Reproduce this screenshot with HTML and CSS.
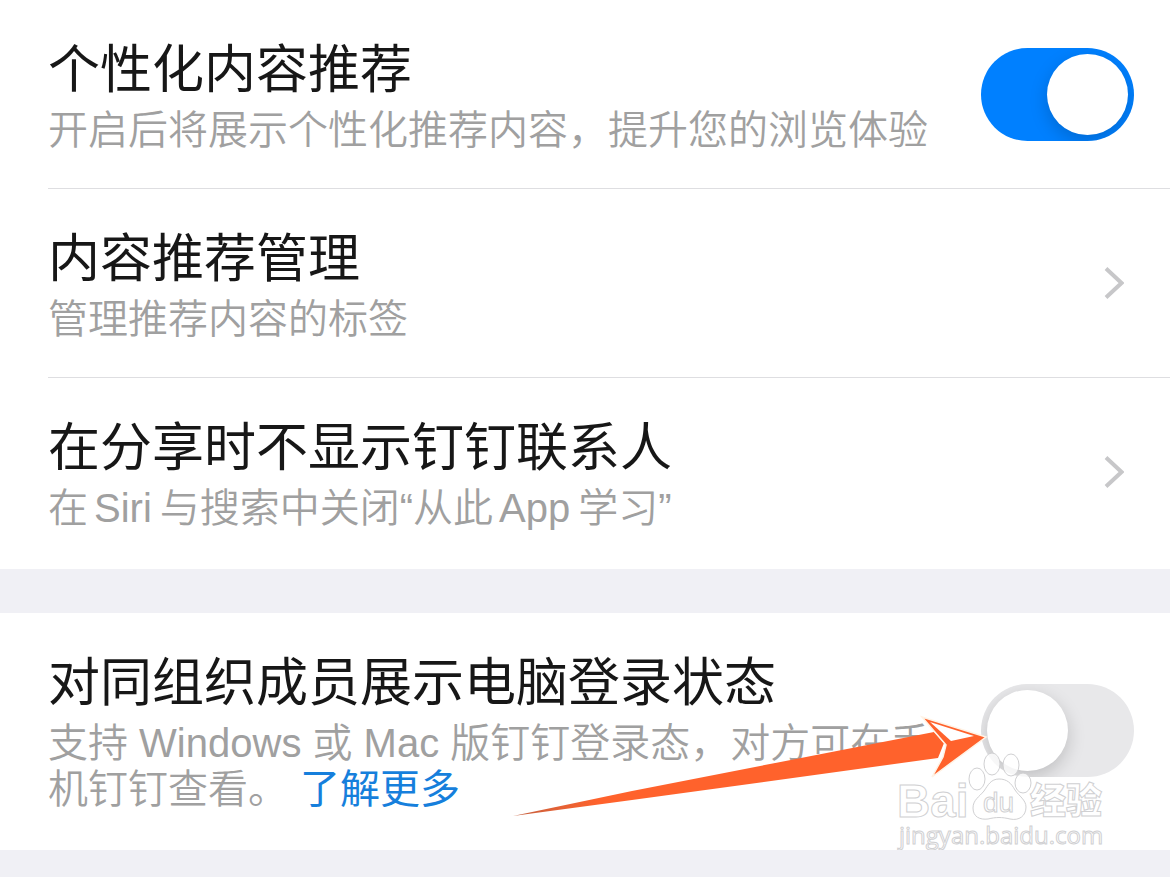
FILE: index.html
```html
<!DOCTYPE html>
<html lang="zh-CN">
<head>
    <meta charset="UTF-8">
    <meta name="viewport" content="width=device-width, initial-scale=1.0">
    <title>隐私设置</title>
    <link rel="stylesheet" href="styles.css">
</head>
<body>
    <main class="settings">
        <section class="group">
            <div class="row">
                <label class="copy" for="personalized">
                    <span class="title">个性化内容推荐</span>
                    <span class="desc">开启后将展示个性化推荐内容，提升您的浏览体验</span>
                </label>
                <input class="switch" type="checkbox" role="switch" id="personalized" checked>
            </div>
            <a class="row" href="#manage">
                <span class="copy">
                    <span class="title">内容推荐管理</span>
                    <span class="desc">管理推荐内容的标签</span>
                </span>
                <svg class="chevron" viewBox="0 0 20 34" aria-hidden="true"><path d="M2 2.500L17.500 17L2 31.500"/></svg>
            </a>
            <a class="row" href="#share">
                <span class="copy">
                    <span class="title">在分享时不显示钉钉联系人</span>
                    <span class="desc">在<span class="latin">Siri</span>与搜索中关闭“从此<span class="latin">App</span>学习”</span>
                </span>
                <svg class="chevron" viewBox="0 0 20 34" aria-hidden="true"><path d="M2 2.500L17.500 17L2 31.500"/></svg>
            </a>
        </section>

        <section class="group">
            <div class="row">
                <div class="copy">
                    <label class="title" for="status">对同组织成员展示电脑登录状态</label>
                    <span class="desc">支持 Windows 或 Mac 版钉钉登录态，对方可在手机钉钉查看。<a class="more" href="#more">了解更多</a></span>
                </div>
                <input class="switch" type="checkbox" role="switch" id="status">
            </div>

            <!-- 指向开关的箭头 -->
            <svg class="arrow" viewBox="0 0 476 104" aria-hidden="true">
                <defs>
                    <linearGradient id="tail" x1="0" x2="1">
                        <stop offset="0" stop-color="#c4603f"/>
                        <stop offset="0.2" stop-color="#ff622c"/>
                    </linearGradient>
                </defs>
                <path d="M1 102L120 77L422 18L432 29L426 44L120 86Z" fill="url(#tail)"/>
                <path d="M410 3L474 23L420 63L431 43L434 31Z" fill="#ff622c" stroke="#fff3e6" stroke-width="1.500"/>
                <path d="M418 8L462 22L439 27Z" fill="#fff"/>
            </svg>

            <!-- 水印 -->
            <svg class="watermark" viewBox="0 0 220 104">
                <g class="mark">
                    <ellipse cx="82" cy="29" rx="8" ry="11"/>
                    <ellipse cx="97" cy="14" rx="8" ry="11"/>
                    <ellipse cx="116" cy="15" rx="8" ry="11"/>
                    <ellipse cx="128" cy="33" rx="8" ry="10"/>
                    <path d="M104 29C96 29 93 35 89 41C84 47 78 50 78 58C78 67 85 70 93 69C101 67 107 67 115 69C124 71 131 66 131 57C131 50 124 46 120 40C116 33 112 29 104 29Z"/>
                    <text class="bai" x="2" y="67">Bai</text>
                    <text class="du" x="88" y="62">du</text>
                    <text class="jingyan" x="135" y="64">经验</text>
                    <text class="site" x="4" y="94">jingyan.baidu.com</text>
                </g>
            </svg>
        </section>
    </main>
</body>
</html>
```
FILE: styles.css
```css
* {
    box-sizing: border-box;
    margin: 0;
    padding: 0;
}
body {
    font-family: "Liberation Sans", "Noto Sans CJK SC", sans-serif;
    background: #f0f0f5;
    color: #171717;
}
.settings {
    display: flex;
    flex-direction: column;
    gap: 44px;
}
.group {
    position: relative;
    background: #fff;
    padding: 0 0 2px 48px;
}
.row {
    display: flex;
    align-items: center;
    gap: 24px;
    padding: 33px 36px 33px 0;
    border-bottom: 1px solid #dedee1;
    color: inherit;
    text-decoration: none;
}
.group .row:nth-last-child(1 of .row) {
    border-bottom-color: transparent;
}
.copy {
    flex: 1;
    min-width: 0;
    padding-bottom: 2px;
}
.title,
.desc {
    display: block;
}
.title {
    font-size: 52px;
    line-height: 74px;
    font-weight: 400;
}
.desc {
    font-size: 40px;
    line-height: 46px;
    font-weight: 350;
    color: #a0a0a0;
}
.latin {
    margin: 0 8px 0 6px;
}
.more {
    margin-left: 12px;
    font-weight: 400;
    color: #167fdc;
    text-decoration: none;
}
.chevron {
    flex: none;
    width: 20px;
    height: 34px;
    margin-right: 10px;
    fill: none;
    stroke: #c7c7c9;
    stroke-width: 4;
}

/* 开关 */
.switch {
    appearance: none;
    flex: none;
    display: flex;
    width: 153px;
    height: 93px;
    padding: 6px;
    border-radius: 47px;
    background: #e8e8ea;
    overflow: hidden;
    cursor: pointer;
}
.switch::before {
    content: "";
    width: 81px;
    height: 81px;
    border-radius: 50%;
    background: #fff;
    box-shadow: 0 6px 18px rgba(0, 0, 0, 0.18);
}
.switch:checked {
    justify-content: flex-end;
    background: #0080ff;
}

/* 覆盖层 */
.arrow,
.watermark {
    position: absolute;
    pointer-events: none;
}
.arrow {
    right: 182px;
    bottom: 32px;
    width: 476px;
    height: 104px;
}
.watermark {
    right: 55px;
    bottom: -4px;
    width: 220px;
    height: 104px;
}
.mark {
    fill: #fff;
    fill-opacity: 0.8;
    stroke: #d0d0d2;
    stroke-width: 1;
}
.mark text {
    font-family: "Open Sans", "Noto Sans CJK SC", sans-serif;
}
.mark .bai {
    font-family: "Liberation Sans", sans-serif;
    font-size: 46px;
    font-weight: 700;
}
.mark .du {
    font-family: "Liberation Sans", sans-serif;
    font-size: 28px;
    font-weight: 400;
}
.mark .jingyan {
    font-size: 36px;
    font-weight: 900;
}
.mark .site {
    font-size: 24px;
    font-weight: 400;
}
```
